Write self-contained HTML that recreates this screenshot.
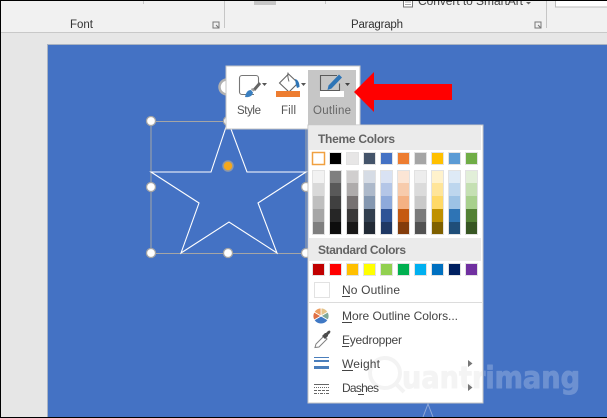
<!DOCTYPE html>
<html><head><meta charset="utf-8"><style>
html,body{margin:0;padding:0;width:607px;height:418px;overflow:hidden;background:#e6e6e6}
svg{display:block;font-family:"Liberation Sans",sans-serif}
</style></head><body>
<svg width="607" height="418" viewBox="0 0 607 418" xmlns="http://www.w3.org/2000/svg">
<defs>
<clipPath id="onBlue"><rect x="484" y="340" width="123" height="70"/></clipPath>
<clipPath id="onMenu"><rect x="309" y="340" width="173" height="62"/></clipPath>
</defs>
<rect width="607" height="418" fill="#e6e6e6"/>
<rect width="607" height="32" fill="#f1f1f1"/>
<rect y="32" width="607" height="1" fill="#c8c8c8"/>
<g fill="#c6c6c6">
<rect x="143" y="0" width="1" height="4"/><rect x="224" y="0" width="1" height="28"/><rect x="325" y="0" width="1" height="4"/><rect x="546" y="0" width="1" height="28"/>
<rect x="254" y="0" width="22" height="5"/>
</g>
<rect x="403.500" y="-3" width="9" height="10" fill="#fff" stroke="#777"/>
<path d="M405 2h6M405 4.500h6" stroke="#aaa"/>
<text x="418" y="5" font-size="12" fill="#444" textLength="105">Convert to SmartArt</text>
<path d="M526 2l5 0-2.500 2.500z" fill="#666"/>
<rect x="555.500" y="-2" width="52" height="9" fill="#fff" stroke="#bbb"/>
<text x="70" y="28" font-size="11.500" fill="#333" textLength="23">Font</text>
<text x="351" y="28" font-size="11.500" fill="#333" textLength="52">Paragraph</text>
<path d="M213 22h6v6h-6zM216 25l3 3" fill="none" stroke="#777"/>
<path d="M535 22h6v6h-6zM538 25l3 3" fill="none" stroke="#777"/>

<rect x="47" y="44" width="560" height="373" fill="#a9b3c2"/>
<rect x="48" y="45" width="559" height="372" fill="#4472c4"/>

<path d="M423 417l5-13 5 13" fill="none" stroke="#8fa8d8"/>

<!-- selection -->
<rect x="151" y="121.500" width="155" height="132" fill="none" stroke="#a5a5a5"/>
<path d="M228 121 247 172 306 172 258 203 277 253 229 222 181 253 199 203 151 172 211 172Z" fill="none" stroke="#fff" stroke-width="1.100"/>
<circle cx="227" cy="87" r="7.500" fill="#fff" stroke="#b0b0b0" stroke-width="2.500"/>
<g fill="#fff" stroke="#a5a5a5" stroke-width="1.300">
<circle cx="151" cy="121" r="4.500"/><circle cx="228" cy="121" r="4.500"/><circle cx="306" cy="121" r="4.500"/>
<circle cx="151" cy="187" r="4.500"/><circle cx="306" cy="187" r="4.500"/>
<circle cx="151" cy="253" r="4.500"/><circle cx="228" cy="253" r="4.500"/><circle cx="306" cy="253" r="4.500"/>
</g>
<circle cx="228" cy="166" r="5" fill="#f5a81c" stroke="#8d97a8" stroke-width="1.500"/>

<!-- toolbar -->
<rect x="226" y="66" width="134" height="63" fill="#fff" stroke="#c6c6c6"/>
<rect x="308" y="70" width="48" height="59" fill="#c6c6c6"/>
<!-- style icon -->
<path d="M254 94.500H242a2.500 2.500 0 0 1-2.500-2.500V78a2.500 2.500 0 0 1 2.500-2.500h14a2.500 2.500 0 0 1 2.500 2.500v6" fill="none" stroke="#777" stroke-width="1.100"/>
<path d="M260 83 254 90" stroke="#666" stroke-width="3"/>
<path d="M252 88l-1 1.500 2.500 2 1.500-1.500z" fill="#999"/>
<path d="M251 90c-3 0-5 2-6 7 3 .5 7 0 8-4.500z" fill="#3a7fc0"/>
<path d="M262 83h5l-2.500 3z" fill="#555"/>
<!-- fill icon -->
<path d="M288.500 74l-9 9 9.500 9 9-9z" fill="#fff" stroke="#666" stroke-width="1.100"/>
<path d="M288 72.500c-.5 3 0 6 1 9" fill="none" stroke="#666"/>
<path d="M295 79c3 .5 4.500 4 4.500 8l-2.500 1-1-3z" fill="#2e75b6"/>
<rect x="276" y="91" width="24" height="6" fill="#ed7d31"/>
<path d="M301 83h5l-2.500 3z" fill="#555"/>
<!-- outline icon -->
<path d="M337 75.500h-16.500v15h19v-7" fill="none" stroke="#5a5a5a" stroke-width="1.100"/>
<path d="M327.500 90l1-4.500 10.500-11 3 3-10.500 11z" fill="#2e75b6"/>
<rect x="320" y="91" width="24" height="6" fill="#fff"/>
<path d="M345 83h5l-2.500 3z" fill="#444"/>
<text x="237" y="114" font-size="11.500" fill="#555" textLength="24">Style</text>
<text x="281" y="114" font-size="11.500" fill="#555" textLength="15">Fill</text>
<text x="313" y="114" font-size="11.500" fill="#666" textLength="38">Outline</text>

<!-- arrow -->
<path d="M354 92 374 72V84H452V100H374V112Z" fill="#ff0000"/>

<!-- menu -->
<rect x="308" y="125" width="175" height="278" fill="#fff" stroke="#c6c6c6"/>
<rect x="309" y="126" width="172" height="24" fill="#ebebeb"/>
<text x="318" y="143" font-size="12" font-weight="bold" fill="#636363" textLength="77">Theme Colors</text>
<rect x="309" y="238" width="172" height="23" fill="#ebebeb"/>
<text x="318" y="254" font-size="12" font-weight="bold" fill="#636363" textLength="88">Standard Colors</text>

<g stroke="#e2e2e2">
<rect x="312.500" y="152.500" width="12" height="12" fill="#fff" stroke="#f0a040" stroke-width="1.500"/>
<rect x="329.500" y="152.500" width="12" height="12" fill="#000"/>
<rect x="346.500" y="152.500" width="12" height="12" fill="#e7e6e6"/>
<rect x="363.500" y="152.500" width="12" height="12" fill="#44546a"/>
<rect x="380.500" y="152.500" width="12" height="12" fill="#4472c4"/>
<rect x="397.500" y="152.500" width="12" height="12" fill="#ed7d31"/>
<rect x="414.500" y="152.500" width="12" height="12" fill="#a5a5a5"/>
<rect x="431.500" y="152.500" width="12" height="12" fill="#ffc000"/>
<rect x="448.500" y="152.500" width="12" height="12" fill="#5b9bd5"/>
<rect x="465.500" y="152.500" width="12" height="12" fill="#70ad47"/>
</g>

<g stroke="none">
<g><rect x="312" y="170" width="13" height="13" fill="#f2f2f2"/><rect x="312" y="183" width="13" height="13" fill="#d9d9d9"/><rect x="312" y="196" width="13" height="13" fill="#bfbfbf"/><rect x="312" y="209" width="13" height="13" fill="#a6a6a6"/><rect x="312" y="222" width="13" height="13" fill="#7f7f7f"/></g>
<g><rect x="329" y="170" width="13" height="13" fill="#7f7f7f"/><rect x="329" y="183" width="13" height="13" fill="#595959"/><rect x="329" y="196" width="13" height="13" fill="#404040"/><rect x="329" y="209" width="13" height="13" fill="#262626"/><rect x="329" y="222" width="13" height="13" fill="#0d0d0d"/></g>
<g><rect x="346" y="170" width="13" height="13" fill="#d0cece"/><rect x="346" y="183" width="13" height="13" fill="#aeabab"/><rect x="346" y="196" width="13" height="13" fill="#767171"/><rect x="346" y="209" width="13" height="13" fill="#3a3838"/><rect x="346" y="222" width="13" height="13" fill="#181717"/></g>
<g><rect x="363" y="170" width="13" height="13" fill="#d6dce5"/><rect x="363" y="183" width="13" height="13" fill="#adb9ca"/><rect x="363" y="196" width="13" height="13" fill="#8497b0"/><rect x="363" y="209" width="13" height="13" fill="#323f4f"/><rect x="363" y="222" width="13" height="13" fill="#222a35"/></g>
<g><rect x="380" y="170" width="13" height="13" fill="#d9e2f3"/><rect x="380" y="183" width="13" height="13" fill="#b4c6e7"/><rect x="380" y="196" width="13" height="13" fill="#8eaadb"/><rect x="380" y="209" width="13" height="13" fill="#2f5496"/><rect x="380" y="222" width="13" height="13" fill="#1f3864"/></g>
<g><rect x="397" y="170" width="13" height="13" fill="#fbe5d5"/><rect x="397" y="183" width="13" height="13" fill="#f7cbac"/><rect x="397" y="196" width="13" height="13" fill="#f4b183"/><rect x="397" y="209" width="13" height="13" fill="#c55a11"/><rect x="397" y="222" width="13" height="13" fill="#833c0b"/></g>
<g><rect x="414" y="170" width="13" height="13" fill="#ededed"/><rect x="414" y="183" width="13" height="13" fill="#dbdbdb"/><rect x="414" y="196" width="13" height="13" fill="#c9c9c9"/><rect x="414" y="209" width="13" height="13" fill="#7b7b7b"/><rect x="414" y="222" width="13" height="13" fill="#525252"/></g>
<g><rect x="431" y="170" width="13" height="13" fill="#fff2cc"/><rect x="431" y="183" width="13" height="13" fill="#ffe599"/><rect x="431" y="196" width="13" height="13" fill="#ffd966"/><rect x="431" y="209" width="13" height="13" fill="#bf9000"/><rect x="431" y="222" width="13" height="13" fill="#7f6000"/></g>
<g><rect x="448" y="170" width="13" height="13" fill="#deeaf6"/><rect x="448" y="183" width="13" height="13" fill="#bdd6ee"/><rect x="448" y="196" width="13" height="13" fill="#9cc2e5"/><rect x="448" y="209" width="13" height="13" fill="#2e74b5"/><rect x="448" y="222" width="13" height="13" fill="#1f4e79"/></g>
<g><rect x="465" y="170" width="13" height="13" fill="#e2efd9"/><rect x="465" y="183" width="13" height="13" fill="#c5e0b3"/><rect x="465" y="196" width="13" height="13" fill="#a8d08d"/><rect x="465" y="209" width="13" height="13" fill="#538135"/><rect x="465" y="222" width="13" height="13" fill="#375623"/></g>
</g>
<g fill="none" stroke="#e2e2e2">
<rect x="312.500" y="170.500" width="12" height="64"/><rect x="329.500" y="170.500" width="12" height="64"/><rect x="346.500" y="170.500" width="12" height="64"/><rect x="363.500" y="170.500" width="12" height="64"/><rect x="380.500" y="170.500" width="12" height="64"/><rect x="397.500" y="170.500" width="12" height="64"/><rect x="414.500" y="170.500" width="12" height="64"/><rect x="431.500" y="170.500" width="12" height="64"/><rect x="448.500" y="170.500" width="12" height="64"/><rect x="465.500" y="170.500" width="12" height="64"/>
</g>

<g stroke="#e2e2e2">
<rect x="312.500" y="263.500" width="12" height="12" fill="#c00000"/>
<rect x="329.500" y="263.500" width="12" height="12" fill="#ff0000"/>
<rect x="346.500" y="263.500" width="12" height="12" fill="#ffc000"/>
<rect x="363.500" y="263.500" width="12" height="12" fill="#ffff00"/>
<rect x="380.500" y="263.500" width="12" height="12" fill="#92d050"/>
<rect x="397.500" y="263.500" width="12" height="12" fill="#00b050"/>
<rect x="414.500" y="263.500" width="12" height="12" fill="#00b0f0"/>
<rect x="431.500" y="263.500" width="12" height="12" fill="#0070c0"/>
<rect x="448.500" y="263.500" width="12" height="12" fill="#002060"/>
<rect x="465.500" y="263.500" width="12" height="12" fill="#7030a0"/>
</g>

<rect x="314.500" y="282.500" width="15" height="15" fill="#fff" stroke="#e2e2e2"/>
<rect x="309" y="302" width="173" height="1" fill="#dcdcdc"/>

<!-- watermark on menu (very faint) -->
<g clip-path="url(#onMenu)" opacity=".4">
<text x="402" y="388" font-family="'DejaVu Sans',sans-serif" font-size="30" font-weight="bold" fill="#e6e6e6" stroke="#e6e6e6" stroke-width="1" stroke-linejoin="round" textLength="178" lengthAdjust="spacingAndGlyphs">uantrimang</text>
<circle cx="385" cy="373" r="15" fill="none" stroke="#e2e2e2" stroke-width="4"/>
<path d="M396 384l8 8" stroke="#e2e2e2" stroke-width="4"/>
</g>

<g font-size="12" fill="#444">
<text x="342" y="294" textLength="58">No Outline</text>
<text x="342" y="320" textLength="116">More Outline Colors...</text>
<text x="342" y="344" textLength="60">Eyedropper</text>
<text x="342" y="368" textLength="38">Weight</text>
<text x="342" y="392" textLength="37">Dashes</text>
</g>
<g fill="#444">
<rect x="342" y="296" width="8" height="1"/><rect x="342" y="322" width="10" height="1"/><rect x="342" y="346" width="7" height="1"/><rect x="342" y="370" width="11" height="1"/><rect x="358" y="394" width="6" height="1"/>
</g>

<!-- more colors wheel -->
<g stroke="#fff" stroke-width=".8">
<path d="M321 316V308a8 8 0 0 1 6.900 4z" fill="#e5c48a"/>
<path d="M321 316l6.900-4a8 8 0 0 1 0 8z" fill="#7fa898"/>
<path d="M321 316l6.900 4a8 8 0 0 1-13.800 0z" fill="#3f78c4"/>
<path d="M321 316l-6.900 4a8 8 0 0 1 0-8z" fill="#df6f44"/>
<path d="M321 316l-6.900-4a8 8 0 0 1 6.900-4z" fill="#ee9f62"/>
</g>
<!-- eyedropper -->
<path d="M315 347.500l1-3.500 8-8 3 3-8 8z" fill="#fff" stroke="#808080"/>
<path d="M322 336l3-3 1 0 2-2c2-1 3 0 2 2l-2 2 0 1-3 3z" fill="#4d4d4d"/>
<!-- weight -->
<rect x="314" y="357" width="15" height="1" fill="#4a7ebb"/>
<rect x="314" y="360" width="15" height="2" fill="#4a7ebb"/>
<rect x="314" y="366" width="15" height="3" fill="#4a7ebb"/>
<!-- dashes -->
<path d="M314 384.500h15" stroke="#666"/>
<path d="M314 387.500h15" stroke="#666" stroke-dasharray="1 1"/>
<path d="M314 390.500h15" stroke="#666" stroke-dasharray="3 1"/>
<path d="M314 393.500h15" stroke="#666" stroke-dasharray="3 1 1 1"/>
<path d="M468 360l4.500 3.500-4.500 3.500zM468 384l4.500 3.500-4.500 3.500z" fill="#777"/>

<!-- watermark on slide -->
<g clip-path="url(#onBlue)" opacity=".22">
<text x="402" y="388" font-family="'DejaVu Sans',sans-serif" font-size="30" font-weight="bold" fill="#fff" stroke="#fff" stroke-width="1" stroke-linejoin="round" textLength="178" lengthAdjust="spacingAndGlyphs">uantrimang</text>
</g>

<!-- screenshot border -->
<rect x="0" y="0" width="1" height="418" fill="#000"/>
<rect x="0" y="0" width="607" height="1" fill="#000"/>
<rect x="0" y="417" width="607" height="1" fill="#000"/>
</svg>
</body></html>
